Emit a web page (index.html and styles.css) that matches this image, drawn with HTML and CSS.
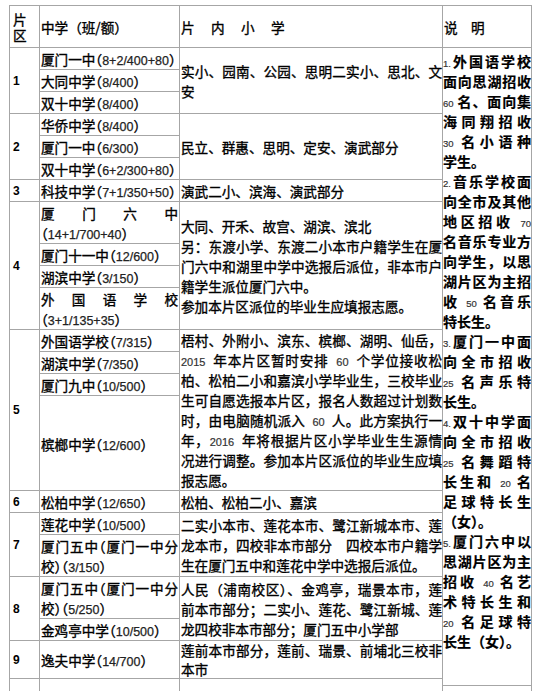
FILE: index.html
```html
<!DOCTYPE html>
<html lang="zh-CN">
<head>
<meta charset="utf-8">
<title>片区划分</title>
<link rel="stylesheet" href="styles.css">
</head>
<body>
<div class="table">
  <div class="cell h c1"><p>片<br>区</p></div>
  <div class="cell h"><p class="left">中学（班/额）</p></div>
  <div class="cell h"><p class="left wide">片内小学</p></div>
  <div class="cell h"><p class="left wide2">说明</p></div>

  <div class="cell no"><p>1</p></div>
  <div class="schools">
    <div class="sc"><p>厦门一中（<span class="d">8+2/400+80</span>）</p></div>
    <div class="sc"><p>大同中学（<span class="d">8/400</span>）</p></div>
    <div class="sc grow"><p>双十中学（<span class="d">8/400</span>）</p></div>
  </div>
  <div class="cell area"><p>实小、园南、公园、思明二实小、思北、文安</p></div>
  <div class="cell notes">
    <p>
      <span class="ln"><span class="s">1.</span>外国语学校</span>
      <span class="ln">面向思湖招收</span>
      <span class="ln"><span class="s">60</span> 名、面向集</span>
      <span class="ln">海同翔招收</span>
      <span class="ln"><span class="s">30</span> 名小语种</span>
      <span class="ln last">学生。</span>
      <span class="ln"><span class="s">2.</span>音乐学校面</span>
      <span class="ln">向全市及其他</span>
      <span class="ln">地区招收 <span class="s">70</span></span>
      <span class="ln">名音乐专业方</span>
      <span class="ln">向学生，以思</span>
      <span class="ln">湖片区为主招</span>
      <span class="ln">收 <span class="s">50</span> 名音乐</span>
      <span class="ln last">特长生。</span>
      <span class="ln"><span class="s">3.</span>厦门一中面</span>
      <span class="ln">向全市招收</span>
      <span class="ln"><span class="s">25</span> 名声乐特</span>
      <span class="ln last">长生。</span>
      <span class="ln"><span class="s">4.</span>双十中学面</span>
      <span class="ln">向全市招收</span>
      <span class="ln"><span class="s">25</span> 名舞蹈特</span>
      <span class="ln">长生和 <span class="s">20</span> 名</span>
      <span class="ln">足球特长生</span>
      <span class="ln last">（女）。</span>
      <span class="ln"><span class="s">5.</span>厦门六中以</span>
      <span class="ln">思湖片区为主</span>
      <span class="ln">招收 <span class="s">40</span> 名艺</span>
      <span class="ln">术特长生和</span>
      <span class="ln"><span class="s">20</span> 名足球特</span>
      <span class="ln last">长生（女）。</span>
    </p>
  </div>

  <div class="cell no"><p>2</p></div>
  <div class="schools">
    <div class="sc"><p>华侨中学（<span class="d">8/400</span>）</p></div>
    <div class="sc"><p>厦门一中（<span class="d">6/300</span>）</p></div>
    <div class="sc grow"><p>双十中学（<span class="d">6+2/300+80</span>）</p></div>
  </div>
  <div class="cell area"><p>民立、群惠、思明、定安、演武部分</p></div>

  <div class="cell no"><p>3</p></div>
  <div class="schools">
    <div class="sc grow"><p>科技中学（<span class="d">7+1/350+50</span>）</p></div>
  </div>
  <div class="cell area"><p>演武二小、滨海、演武部分</p></div>

  <div class="cell no"><p>4</p></div>
  <div class="schools">
    <div class="sc"><p>厦门六中（<span class="d">14+1/700+40</span>）</p></div>
    <div class="sc"><p>厦门十一中（<span class="d">12/600</span>）</p></div>
    <div class="sc"><p>湖滨中学（<span class="d">3/150</span>）</p></div>
    <div class="sc grow"><p>外国语学校（<span class="d">3+1/135+35</span>）</p></div>
  </div>
  <div class="cell area"><p>大同、开禾、故宫、湖滨、滨北<br>另：东渡小学、东渡二小本市户籍学生在厦门六中和湖里中学中选报后派位，非本市户籍学生派位厦门六中。<br>参加本片区派位的毕业生应填报志愿。</p></div>

  <div class="cell no"><p>5</p></div>
  <div class="schools">
    <div class="sc"><p>外国语学校（<span class="d">7/315</span>）</p></div>
    <div class="sc"><p>湖滨中学（<span class="d">7/350</span>）</p></div>
    <div class="sc"><p>厦门九中（<span class="d">10/500</span>）</p></div>
    <div class="sc grow"><p>槟榔中学（<span class="d">12/600</span>）</p></div>
  </div>
  <div class="cell area"><p>梧村、外附小、滨东、槟榔、湖明、仙岳，<span class="s">2015</span> 年本片区暂时安排 <span class="s">60</span> 个学位接收松柏、松柏二小和嘉滨小学毕业生，三校毕业生可自愿选报本片区，报名人数超过计划数时，由电脑随机派入 <span class="s">60</span> 人。此方案执行一年，<span class="s">2016</span> 年将根据片区小学毕业生生源情况进行调整。参加本片区派位的毕业生应填报志愿。</p></div>

  <div class="cell no"><p>6</p></div>
  <div class="schools">
    <div class="sc grow"><p>松柏中学（<span class="d">12/650</span>）</p></div>
  </div>
  <div class="cell area"><p>松柏、松柏二小、嘉滨</p></div>

  <div class="cell no"><p>7</p></div>
  <div class="schools">
    <div class="sc"><p>莲花中学（<span class="d">10/500</span>）</p></div>
    <div class="sc grow"><p>厦门五中（厦门一中分校）（<span class="d">3/150</span>）</p></div>
  </div>
  <div class="cell area"><p>二实小本市、莲花本市、鹭江新城本市、莲龙本市，四校非本市部分　四校本市户籍学生在厦门五中和莲花中学中选报后派位。</p></div>

  <div class="cell no"><p>8</p></div>
  <div class="schools">
    <div class="sc"><p>厦门五中（厦门一中分校）（<span class="d">5/250</span>）</p></div>
    <div class="sc grow"><p>金鸡亭中学（<span class="d">10/500</span>）</p></div>
  </div>
  <div class="cell area"><p>人民（浦南校区）、金鸡亭，瑞景本市，莲前本市部分；二实小、莲花、鹭江新城、莲龙四校非本市部分；厦门五中小学部</p></div>

  <div class="cell no"><p>9</p></div>
  <div class="schools">
    <div class="sc grow"><p>逸夫中学（<span class="d">14/700</span>）</p></div>
  </div>
  <div class="cell area tight"><p>莲前本市部分，莲前、瑞景、前埔北三校非本市</p></div>

  <div class="cell end"></div>
  <div class="cell end"></div>
  <div class="cell end"></div>
  <div class="cell tail"></div>
</div>
</body>
</html>
```

FILE: styles.css
```css
* {
  box-sizing: border-box;
}

html,
body {
  margin: 0;
  background: #ffffff;
}

body {
  font-family: "Noto Sans CJK SC", "Noto Sans CJK JP", sans-serif;
  font-size: 13.6px;
  line-height: 20px;
  font-weight: 400;
  color: #000000;
  -webkit-text-stroke: 0.35px #000000;
}

.table {
  display: grid;
  grid-template-columns: 29px 139px 262px 88px;
  grid-template-rows: repeat(10, auto) 6px auto;
  gap: 1px;
  width: max-content;
  margin: 5px 0 0 9px;
  background: #a6a6a6;
  border: 1px solid #a6a6a6;
}

.cell {
  background: #ffffff;
  display: flex;
  flex-direction: column;
  justify-content: center;
  padding: 0 1px;
}

.cell p,
.sc p {
  margin: 0;
  text-align: justify;
}

.h {
  min-height: 41px;
}

.h .left {
  text-align: left;
}

.c1 {
  padding-left: 3px;
  line-height: 16px;
}

.wide {
  letter-spacing: 16.4px;
}

.wide2 {
  letter-spacing: 13.4px;
}

.no {
  padding-left: 3px;
  font-family: "Liberation Sans", Arial, sans-serif;
  font-weight: 700;
  font-size: 12px;
  -webkit-text-stroke: 0;
}

.schools {
  display: flex;
  flex-direction: column;
  gap: 1px;
}

.sc {
  background: #ffffff;
  display: flex;
  flex-direction: column;
  justify-content: center;
  padding: 1px 1px 0;
  font-feature-settings: "halt";
}

.sc.grow {
  flex: 1 0 auto;
}

.d {
  font-family: "Liberation Sans", Arial, sans-serif;
  font-size: 12.5px;
  line-height: 1;
  color: #222222;
  font-feature-settings: normal;
  -webkit-text-stroke: 0.25px #222222;
}

.s {
  font-family: "Liberation Sans", Arial, sans-serif;
  font-size: 9.5px;
  line-height: 1;
  font-weight: 400;
  color: #333333;
  -webkit-text-stroke: 0.2px #333333;
}

.area {
  padding: 0 0 0 1px;
}

.area p {
  word-spacing: 4px;
}

.area .s {
  font-size: 11px;
}

.tight {
  line-height: 18.5px;
}

.notes {
  grid-row: span 10;
  justify-content: flex-start;
  padding: 3px 0 0 0;
  font-size: 14px;
  font-weight: 700;
  line-height: 20px;
  -webkit-text-stroke: 0.2px #000000;
}

.ln {
  display: block;
  text-align: justify;
  text-align-last: justify;
}

.ln.last {
  text-align-last: left;
}

.end {
  grid-row: span 2;
  min-height: 60px;
}

.tail {
  grid-column: 4;
  grid-row: 12;
}
```
